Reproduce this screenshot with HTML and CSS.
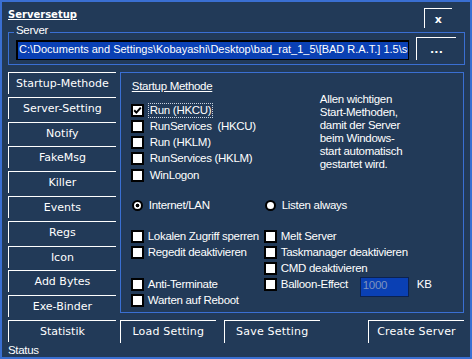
FILE: index.html
```html
<!DOCTYPE html>
<html lang="de">
<head>
  <meta charset="UTF-8">
  <title>Serversetup</title>
  <link rel="stylesheet" href="styles.css">
</head>
<body>
  <div class="window">
    <div class="titlebar">
      <span class="title">Serversetup</span>
      <div class="btn close">x</div>
    </div>

    <div class="server-box">
      <span class="legend">Server</span>
      <div class="path">C:\Documents and Settings\Kobayashi\Desktop\bad_rat_1_5\[BAD R.A.T.] 1.5\server.exe</div>
      <div class="btn browse">...</div>
    </div>

    <div class="main">
      <div class="tabs">
        <div class="tab">Startup-Methode</div>
        <div class="tab">Server-Setting</div>
        <div class="tab">Notify</div>
        <div class="tab">FakeMsg</div>
        <div class="tab">Killer</div>
        <div class="tab">Events</div>
        <div class="tab">Regs</div>
        <div class="tab">Icon</div>
        <div class="tab">Add Bytes</div>
        <div class="tab">Exe-Binder</div>
        <div class="tab">Statistik</div>
      </div>

      <div class="content">
        <div class="panel">
          <div class="top">
            <div class="methods">
              <div class="heading">Startup Methode</div>
              <div class="check-row">
                <span class="box checked"><svg width="9" height="9" viewBox="0 0 9 9"><polyline points="1.2,4.2 3.4,6.6 7.8,1.6" fill="none" stroke="#000" stroke-width="2"/></svg></span>
                <span class="label focus">Run (HKCU)</span>
              </div>
              <div class="check-row">
                <span class="box"></span>
                <span class="label">RunServices &nbsp;(HKCU)</span>
              </div>
              <div class="check-row">
                <span class="box"></span>
                <span class="label">Run (HKLM)</span>
              </div>
              <div class="check-row">
                <span class="box"></span>
                <span class="label">RunServices (HKLM)</span>
              </div>
              <div class="check-row winlogon">
                <span class="box"></span>
                <span class="label">WinLogon</span>
              </div>
            </div>
            <div class="hint">
              Allen wichtigen<br>
              Start-Methoden,<br>
              damit der Server<br>
              beim Windows-<br>
              start automatisch<br>
              gestartet wird.
            </div>
          </div>

          <div class="radios">
            <div class="radio-row">
              <span class="radio on"></span>
              <span>Internet/LAN</span>
            </div>
            <div class="radio-row">
              <span class="radio"></span>
              <span>Listen always</span>
            </div>
          </div>

          <div class="options">
            <div class="opt"><span class="box"></span><span>Lokalen Zugriff sperren</span></div>
            <div class="opt"><span class="box"></span><span>Melt Server</span></div>
            <div class="opt"><span class="box"></span><span>Regedit deaktivieren</span></div>
            <div class="opt"><span class="box"></span><span>Taskmanager deaktivieren</span></div>
            <div class="opt"></div>
            <div class="opt"><span class="box"></span><span>CMD deaktivieren</span></div>
            <div class="opt"><span class="box"></span><span>Anti-Terminate</span></div>
            <div class="opt">
              <span class="box"></span>
              <span class="balloon-label">Balloon-Effect</span>
              <span class="size-input">1000</span>
              <span class="unit">KB</span>
            </div>
            <div class="opt"><span class="box"></span><span>Warten auf Reboot</span></div>
            <div class="opt"></div>
          </div>
        </div>

        <div class="actions">
          <div class="btn action">Load Setting</div>
          <div class="btn action">Save Setting</div>
          <div class="btn action create">Create Server</div>
        </div>
      </div>
    </div>

    <div class="status">Status</div>
  </div>
</body>
</html>
```

FILE: styles.css
```css
:root {
  --bg: #223a58;
  --line: #3a6fd2;
  --field: #0a40b4;
  --ui-font: "DejaVu Sans", Verdana, sans-serif;
}
* { box-sizing: border-box; }
html, body {
  margin: 0;
  background: var(--bg);
}
.window {
  width: 472px;
  height: 359px;
  border: 2px solid var(--line);
  background: var(--bg);
  color: #fff;
  padding: 6px 6px 0;
  font-family: "Liberation Sans", Arial, sans-serif;
  font-size: 11.5px;
  letter-spacing: -0.3px;
  display: flex;
  flex-direction: column;
  overflow: hidden;
}

/* buttons: only top + left edge lit */
.btn {
  border-top: 1px solid #fff;
  border-left: 1px solid #fff;
  display: flex;
  align-items: center;
  justify-content: center;
  font-family: var(--ui-font);
  font-size: 11px;
  letter-spacing: 0.2px;
  color: #fff;
}

/* Titel */
.titlebar {
  display: flex;
  justify-content: space-between;
  height: 20px;
}
.title {
  font-family: var(--ui-font);
  font-weight: bold;
  font-size: 10px;
  letter-spacing: 0;
  line-height: 12px;
  padding-top: 1px;
  text-decoration: underline;
}
.close {
  width: 28px;
  height: 20px;
  margin-right: 12px;
  font-weight: bold;
  padding-top: 1px;
}

/* Server */
.server-box {
  position: relative;
  margin-top: 4px;
  width: 457px;
  height: 33px;
  border: 1px solid var(--line);
  display: flex;
  align-items: flex-end;
  gap: 7px;
  padding: 0 8px 4px 7px;
}
.legend {
  position: absolute;
  top: -9px;
  left: 5px;
  padding: 0 2px;
  background: var(--bg);
  line-height: 13px;
}
.path {
  width: 393px;
  height: 20px;
  background: var(--field);
  border: 1px solid #000;
  box-shadow: inset 1px 1px 0 #000;
  padding-left: 2px;
  font-size: 11px;
  letter-spacing: 0;
  line-height: 16px;
  white-space: nowrap;
  overflow: hidden;
}
.browse {
  width: 40px;
  height: 23px;
  font-weight: bold;
}

/* Hauptbereich */
.main {
  display: flex;
  gap: 4px;
  margin-top: 7px;
  height: 272px;
}
.tabs { width: 108px; }
.tab {
  height: 22px;
  margin-bottom: 3px;
  border-top: 1px solid #fff;
  border-left: 1px solid #fff;
  text-align: center;
  font-family: var(--ui-font);
  font-size: 11px;
  letter-spacing: 0;
  line-height: 21px;
}
.tab:nth-child(3),
.tab:nth-child(8) { margin-bottom: 2px; }
.tab:last-child { margin-bottom: 0; }

.content { width: 345px; }
.panel {
  height: 241px;
  border: 1px solid var(--line);
  padding: 6px 0 0 10px;
}
.top { display: flex; }
.methods { width: 189px; }
.heading {
  margin-left: 1px;
  line-height: 15px;
  text-decoration: underline;
  margin-bottom: 8px;
}
.check-row {
  display: flex;
  align-items: center;
  height: 16px;
  gap: 4px;
}
.check-row.winlogon { margin-top: 1px; }
.box {
  width: 13px;
  height: 13px;
  flex: none;
  border: 2px solid #000;
  background: #fff;
  display: flex;
  align-items: center;
  justify-content: center;
}
.label {
  line-height: 13px;
  border: 1px solid transparent;
  padding: 0 1px;
  white-space: pre;
}
.label.focus { border: 1px dotted #c9d2e0; }
.hint {
  margin-top: 14px;
  line-height: 13px;
}

.radios {
  display: grid;
  grid-template-columns: 133px auto;
  margin-top: 14px;
}
.radio-row {
  display: flex;
  align-items: center;
  height: 16px;
  gap: 6px;
}
.radio {
  width: 11px;
  height: 11px;
  margin-left: 1px;
  border: 2px solid #000;
  border-radius: 50%;
  background: #fff;
}
.radio.on { background: radial-gradient(circle, #000 0 1.6px, #fff 2.2px); }

.options {
  display: grid;
  grid-template-columns: 133px auto;
  grid-auto-rows: 16px;
  margin-top: 15px;
}
.opt {
  display: flex;
  align-items: center;
  gap: 4px;
  white-space: nowrap;
}
.balloon-label { width: 79px; }
.size-input {
  align-self: flex-start;
  margin-top: 1px;
  margin-left: -4px;
  width: 49px;
  height: 20px;
  background: var(--field);
  border: 1px solid #0b2250;
  color: #7d93bd;
  padding-left: 2px;
  line-height: 14px;
}
.unit { margin-left: 4px; }

/* Knöpfe unten */
.actions {
  display: flex;
  gap: 8px;
  margin-top: 7px;
}
.action {
  width: 96px;
  height: 23px;
  line-height: 22px;
}
.create { margin-left: auto; }

.status { line-height: 13px; }
```
